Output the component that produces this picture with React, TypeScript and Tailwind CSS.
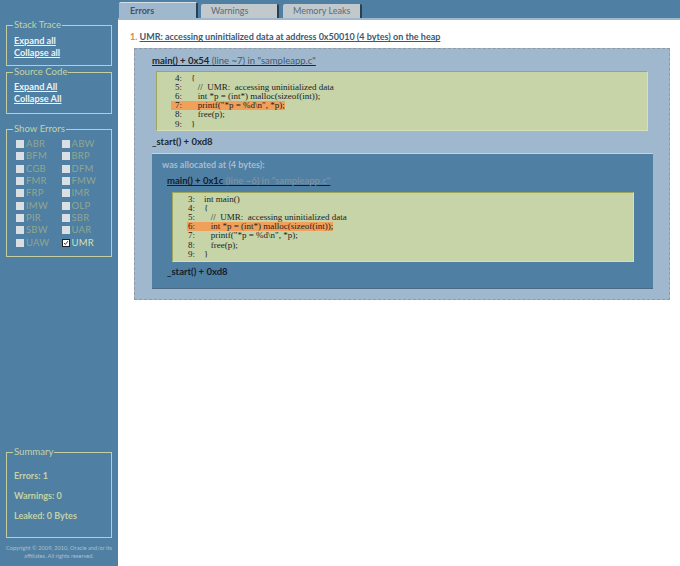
const sans = "font-['Lato','Noto_Sans',sans-serif]";

function Box({ title, className, children }: { title: string; className: string; children: React.ReactNode }) {
  return (
    <fieldset className={`mx-[6px] border border-[#c3cfa0] pl-[7px] pr-1 ${className}`}>
      <legend className="-ml-[1px] px-[1px] text-[9.6px] leading-[12px] text-[#c3d3a6]">{title}</legend>
      {children}
    </fieldset>
  );
}

const errs: [string, boolean][] = [
  ["ABR", false], ["ABW", false], ["BFM", false], ["BRP", false], ["CGB", false], ["DFM", false],
  ["FMR", false], ["FMW", false], ["FRP", false], ["IMR", false], ["IMW", false], ["OLP", false],
  ["PIR", false], ["SBR", false], ["SBW", false], ["UAR", false], ["UAW", false], ["UMR", true],
];

function Check({ label, on }: { label: string; on: boolean }) {
  return (
    <div className="flex h-[12.3px] items-center gap-[2px]">
      <span className={`flex h-[8px] w-[8px] items-center justify-center ${on ? "border border-[#222] bg-white" : "bg-[#d9dfe3]"}`}>
        {on && (
          <svg viewBox="0 0 8 8" className="h-[6px] w-[6px]">
            <path d="M1.5 4 L3.2 6 L6.5 1.5" fill="none" stroke="#333" strokeWidth="1.3" />
          </svg>
        )}
      </span>
      <span className={`text-[9.5px] leading-[12px] tracking-[0.2px] ${on ? "text-[#d5e0b8]" : "text-[#8fa78f]"}`}>{label}</span>
    </div>
  );
}

function Sidebar() {
  return (
    <aside className="flex h-[566px] w-[118px] shrink-0 flex-col bg-[#4f7fa3] pt-[19px]">
      <Box title="Stack Trace" className="h-[47px]">
        <div className="mt-[4px] text-[9.2px] font-bold leading-[12px] text-[#eef2f2]">
          <div className="underline">Expand all</div>
          <div className="underline">Collapse all</div>
        </div>
      </Box>
      <Box title="Source Code" className="h-[48px]">
        <div className="mt-[3px] text-[9.2px] font-bold leading-[12px] text-[#eef2f2]">
          <div className="underline">Expand All</div>
          <div className="underline">Collapse All</div>
        </div>
      </Box>
      <Box title="Show Errors" className="mt-[9px] h-[134px]">
        <div className="mt-[3px] grid grid-cols-[45.5px_1fr] pl-[2px]">
          {errs.map(([l, on]) => (
            <Check key={l} label={l} on={on} />
          ))}
        </div>
      </Box>
      <Box title="Summary" className="mt-auto h-[92px]">
        <div className="mt-[12px] flex flex-col gap-[8px] text-[9px] font-bold leading-[12px] text-[#c3d3a6]">
          <div>Errors: 1</div>
          <div>Warnings: 0</div>
          <div>Leaked: 0 Bytes</div>
        </div>
      </Box>
      <p className="mb-[6px] mt-[6px] whitespace-nowrap text-center text-[5.7px] leading-[8px] text-[#a9c0d0]">
        Copyright © 2009, 2010, Oracle and/or its
        <br />
        affiliates. All rights reserved.
      </p>
    </aside>
  );
}

function Tabs() {
  const base = "flex items-center rounded-t-[2px] border-r-2 border-[#28404f] text-[9px]";
  return (
    <div className="flex h-[20px] items-end border-b-2 border-b-[#a0b8ce] bg-[#4f7fa3] pl-[1px]">
      <div className={`${base} h-[16px] w-[79px] border-t border-t-[#d5dfe8] bg-[#a0b8ce] pl-[11px] font-bold text-[#3d5566]`}>Errors</div>
      <div className={`${base} ml-[3px] h-[14px] w-[78px] bg-[#c2c9cd] pl-[10px] text-[#5c6b74]`}>Warnings</div>
      <div className={`${base} ml-[4px] h-[14px] w-[79px] bg-[#c2c9cd] pl-[10px] text-[#5c6b74]`}>Memory Leaks</div>
    </div>
  );
}

function Code({ lines, hi, pad, num, className }: { lines: [string, string][]; hi: string; pad: number; num: number; className: string }) {
  return (
    <div className={`border-t border-t-[#9ea65c] border-r border-r-[#d6dfb8] border-b border-b-[#d6dfb8] border-l border-l-[#9ea65c] bg-[#c6d4a8] py-[1.5px] pl-[14px] font-['Liberation_Serif',serif] text-[9px] leading-[9.2px] text-[#222] ${className}`}>
      {lines.map(([n, t]) => (
        <div key={n} className={n === hi ? "w-fit bg-[#f0a05a]" : "w-fit"}>
          <span className="inline-block" style={{ width: pad, paddingLeft: num }}>{n + ":"}</span>
          <span className="whitespace-pre">{t}</span>
        </div>
      ))}
    </div>
  );
}

const code1: [string, string][] = [
  ["4", "{"],
  ["5", "   //  UMR:  accessing uninitialized data"],
  ["6", "   int *p = (int*) malloc(sizeof(int));"],
  ["7", "   printf(\"*p = %d\\n\", *p);"],
  ["8", "   free(p);"],
  ["9", "}"],
];
const code2: [string, string][] = [
  ["3", "int main()"],
  ["4", "{"],
  ["5", "   //  UMR:  accessing uninitialized data"],
  ["6", "   int *p = (int*) malloc(sizeof(int));"],
  ["7", "   printf(\"*p = %d\\n\", *p);"],
  ["8", "   free(p);"],
  ["9", "}"],
];

function Main() {
  return (
    <main className="min-w-0 flex-1 bg-white">
      <Tabs />
      <div className="pl-[12px] pr-[10px] pt-[10px]">
        <div className="text-[9px] font-bold leading-[14px] text-[#3b5a72]">
          <span className="text-[#d98a3d]">1. </span>
          <span className="underline [text-decoration-skip-ink:none]">UMR: accessing uninitialized data at address 0x50010 (4 bytes) on the heap</span>
        </div>
        <div className="ml-[4px] mt-[4px] h-[252px] border border-dashed border-[#8f9aa5] bg-[#a0b8ce] pl-[17px] pr-[16px] pt-[6px]">
          <div className="text-[9.5px] font-bold leading-[12px] text-[#1c2830] underline [text-decoration-skip-ink:none]">
            main() + 0x54 <span className="font-normal text-[#45596b]">(line ~7) in "sampleapp.c"</span>
          </div>
          <Code lines={code1} hi="7" pad={20} num={4} className="ml-[4px] mr-[5px] mt-[4px] h-[60px]" />
          <div className="mt-[5px] text-[9.5px] font-bold leading-[12px] text-[#1c2830]">_start() + 0xd8</div>
          <div className="mt-[5px] h-[136px] border-t border-t-[#c5d3e0] border-b border-b-[#4a6a85] bg-[#4f7fa3] pl-[15px] pr-[19px] pt-[5px]">
            <div className="-ml-[5px] text-[9px] font-bold leading-[12px] text-[#a8bdcf]">was allocated at (4 bytes):</div>
            <div className="mt-[4px] text-[9.5px] font-bold leading-[12px] text-[#14202a] underline [text-decoration-skip-ink:none]">
              main() + 0x1c <span className="font-medium text-[#8a9096]">(line ~6) in "sampleapp.c"</span>
            </div>
            <Code lines={code2} hi="6" pad={17} num={1} className="ml-[5px] mt-[5px] h-[70px]" />
            <div className="mt-[4px] text-[9.5px] font-bold leading-[12px] text-[#14202a]">_start() + 0xd8</div>
          </div>
        </div>
      </div>
    </main>
  );
}

export default function App() {
  return (
    <div className={`flex h-[566px] w-[680px] overflow-hidden ${sans}`}>
      <Sidebar />
      <Main />
    </div>
  );
}
